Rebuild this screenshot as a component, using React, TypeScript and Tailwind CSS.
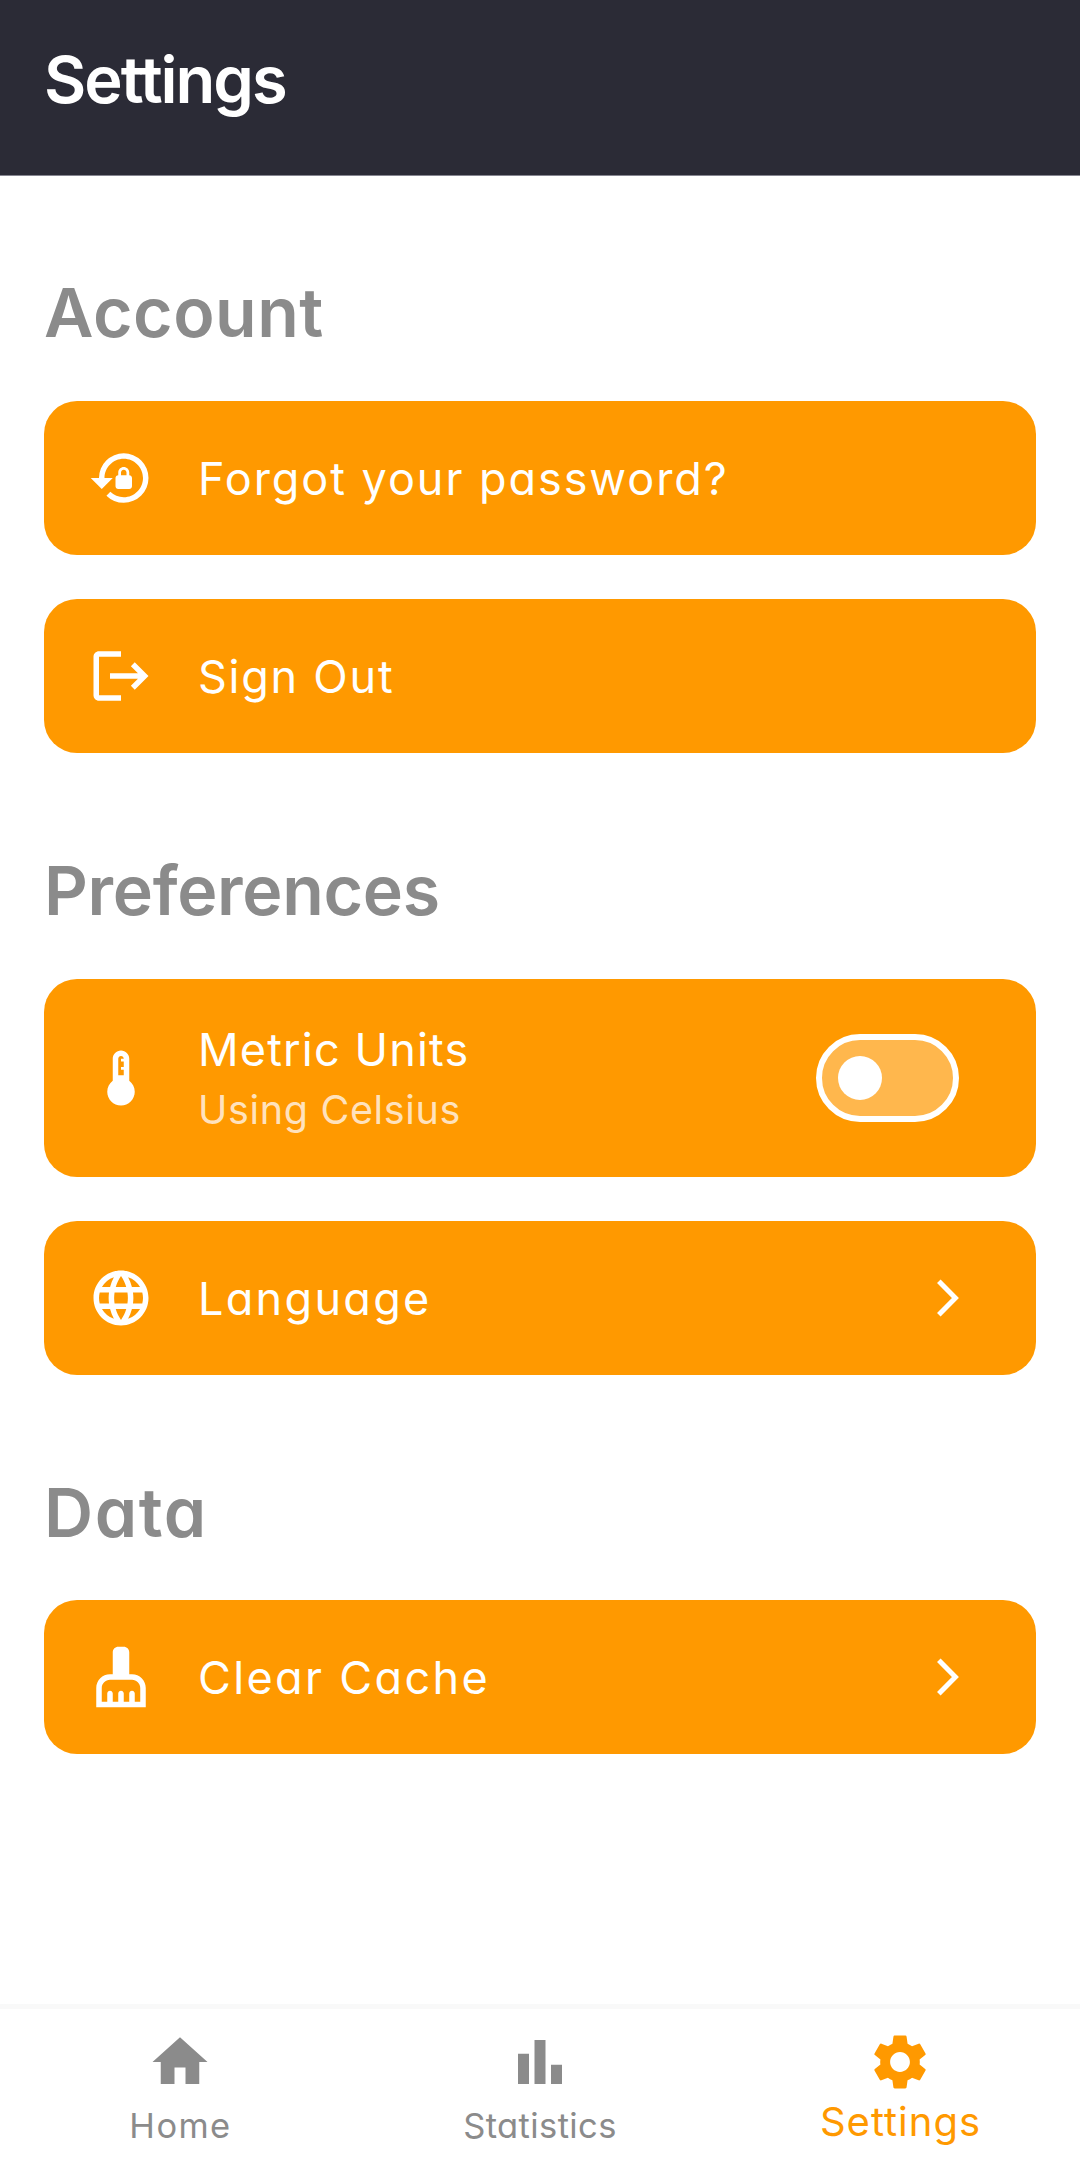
import { useState } from "react";
import type { ReactNode } from "react";
import type { IconType } from "react-icons";
import {
  MdBarChart,
  MdCleaningServices,
  MdDeviceThermostat,
  MdHome,
  MdLanguage,
  MdLockReset,
  MdLogout,
  MdSettings,
} from "react-icons/md";

function Chevron() {
  return (
    <svg className="h-[38px] w-[22px]" viewBox="0 0 22 38" fill="none" stroke="currentColor" strokeWidth="5">
      <path d="M1.8 2.2 18.4 19 1.8 35.8" />
    </svg>
  );
}

function Toggle() {
  const [on, setOn] = useState(false);
  return (
    <button
      type="button"
      role="switch"
      aria-checked={on}
      aria-label="Metric Units"
      onClick={() => setOn(!on)}
      className={`flex h-[88px] w-[143px] items-center rounded-full border-6 border-white bg-[#ffb74d] px-4 ${on ? "justify-end" : "justify-start"}`}
    >
      <span className="size-11 rounded-full bg-white" />
    </button>
  );
}

function Section({ title, titleClass, children }: { title: string; titleClass: string; children: ReactNode }) {
  return (
    <section className="pt-[93px]">
      <h2 className={`text-[68px] leading-[88px] font-[600] text-[#8b8b8b] ${titleClass}`}>{title}</h2>
      <div className="flex flex-col gap-11">{children}</div>
    </section>
  );
}

interface CardProps {
  icon: IconType;
  title: string;
  titleClass: string;
  subtitle?: string;
  trailing?: ReactNode;
}

function Card({ icon: Icon, title, titleClass, subtitle, trailing }: CardProps) {
  return (
    <div
      className={`flex items-center rounded-[33px] bg-[#ff9900] pr-[77px] pl-11 text-white ${subtitle ? "h-[198px]" : "h-[154px]"}`}
    >
      <Icon className="size-[66px] shrink-0" />
      <div className={`ml-11 flex-1 leading-[60px] whitespace-nowrap ${subtitle ? "pt-1" : "pt-px"}`}>
        <div className={`text-[45px] ${titleClass}`}>{title}</div>
        {subtitle && <div className="text-[39.5px] tracking-[0.65px] text-[#ffe2bd]">{subtitle}</div>}
      </div>
      {trailing}
    </div>
  );
}

function NavItem({ icon: Icon, label, className, labelClass }: { icon: IconType; label: string; className: string; labelClass: string }) {
  return (
    <button type="button" className={`flex flex-1 flex-col items-center pt-5 ${className}`}>
      <Icon className="size-[66px]" />
      <span className={`leading-[52px] ${labelClass}`}>{label}</span>
    </button>
  );
}

export default function App() {
  return (
    <div className="flex h-[2168px] w-[1080px] flex-col bg-white font-['Inter',sans-serif] [font-feature-settings:'cv11']">
      <header className="h-[176px] shrink-0 border-b border-[#858590] bg-[#2b2b36] px-11 pt-[33px]">
        <h1 className="text-[65px] leading-[94px] font-[620] tracking-[-2px] text-white">Settings</h1>
      </header>

      <main className="-mt-px flex-1 px-11">
        <Section title="Account" titleClass="mb-[45px] tracking-[0.5px]">
          <Card icon={MdLockReset} title="Forgot your password?" titleClass="tracking-[1.95px]" />
          <Card icon={MdLogout} title="Sign Out" titleClass="tracking-[1.75px]" />
        </Section>
        <Section title="Preferences" titleClass="mb-[45px] tracking-[-0.3px]">
          <Card
            icon={MdDeviceThermostat}
            title="Metric Units"
            titleClass="tracking-[1.15px]"
            subtitle="Using Celsius"
            trailing={<Toggle />}
          />
          <Card icon={MdLanguage} title="Language" titleClass="tracking-[2.3px]" trailing={<Chevron />} />
        </Section>
        <Section title="Data" titleClass="mb-11 tracking-[1.6px]">
          <Card icon={MdCleaningServices} title="Clear Cache" titleClass="tracking-[2.35px]" trailing={<Chevron />} />
        </Section>
      </main>

      <nav className="flex h-[164px] shrink-0 border-t-5 border-[#f9f9f9] bg-white">
        <NavItem icon={MdHome} label="Home" className="text-[#8b8b8b]" labelClass="mt-[5px] pl-px text-[34.5px] tracking-[1.4px]" />
        <NavItem icon={MdBarChart} label="Statistics" className="text-[#8b8b8b]" labelClass="mt-[5px] text-[34.5px] tracking-[0.4px]" />
        <NavItem icon={MdSettings} label="Settings" className="text-[#ff9900]" labelClass="mt-px pl-px text-[40px] tracking-[1px]" />
      </nav>
    </div>
  );
}
